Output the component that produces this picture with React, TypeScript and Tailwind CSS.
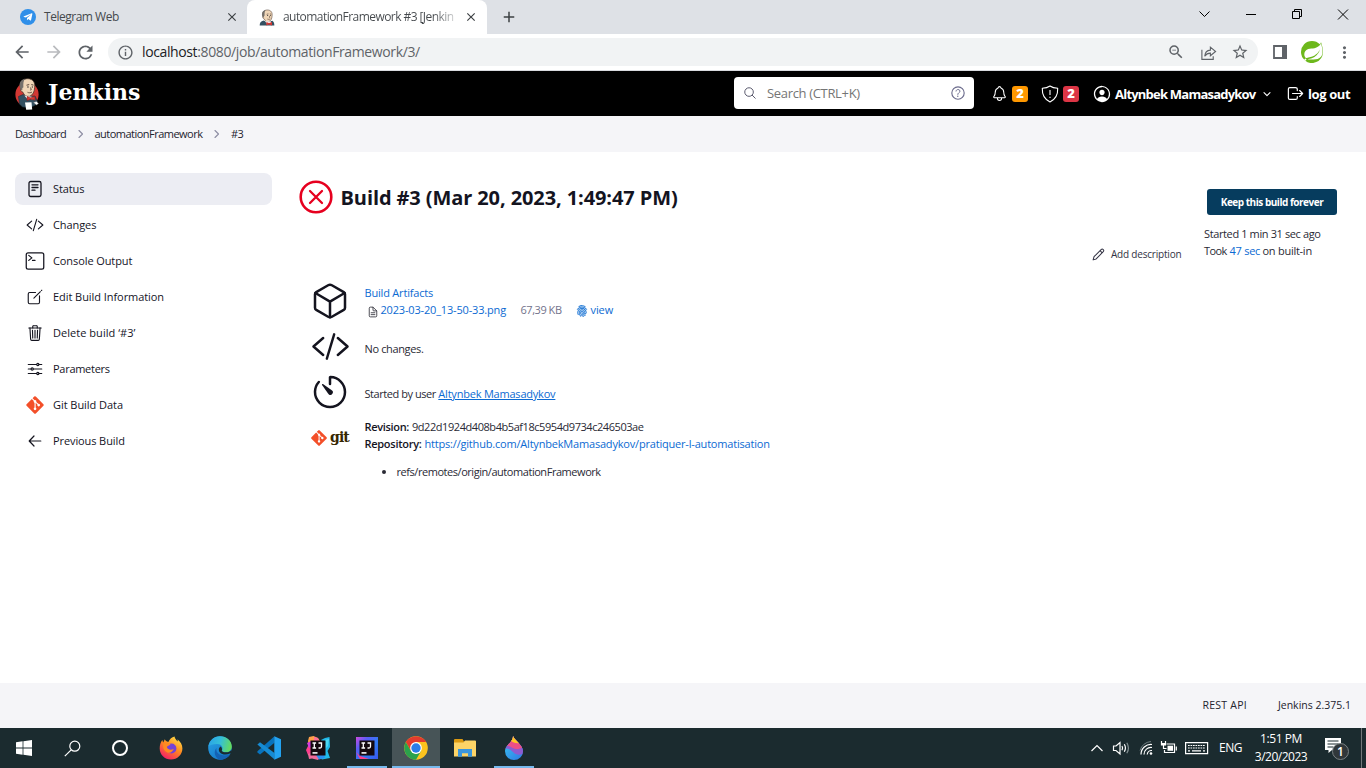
import React from "react";
import {
  IoCodeSlashOutline, IoTerminalOutline, IoCreateOutline, IoTrashOutline, IoOptionsOutline,
  IoCubeOutline, IoTimerOutline, IoNotificationsOutline, IoHelpCircleOutline, IoSearchOutline, IoPersonCircleOutline,
  IoLogOutOutline, IoDocumentTextOutline, IoFingerPrintOutline,
} from "react-icons/io5";
import { MdArrowBack, MdArrowForward, MdRefresh, MdInfoOutline, MdOutlineZoomOut, MdStarOutline, MdMoreVert, MdClose, MdAdd } from "react-icons/md";
import { FaGitAlt, FaTelegramPlane } from "react-icons/fa";
import { SiSpring } from "react-icons/si";

function ButlerFace() {
  return (
    <>
      <path d="M5.500 10C4 4 8 .5 13 .7c5 .2 7.500 4 6.600 9-.2 4-1.600 7.300-5 8.600-3.500.6-5.600-1-6.600-4-1.700-.5-2.700-2-2.500-4.300z" fill="#f0d6b7" stroke="#49372d" strokeWidth=".8" />
      <path d="M5.300 10.500C3.500 5 5.500 1.800 10 .8 8.300 3 8.200 6 8.400 9.500c-.8-.2-1.400.8-1 2.800-1.200-.2-1.700-.8-2.100-1.800z" fill="#74706b" />
      <path d="M11.500 7.200l2.700-.6M16.300 6.600l2.200.5" fill="none" stroke="#49372d" strokeWidth=".9" />
      <path d="M12.200 9h1.500M16.800 9h1.200" stroke="#222" strokeWidth="1.200" />
      <path d="M12.500 14.300c1.500.8 3.200.6 4.500-.3M15.500 9.500l.8 2.200-1.200.4" fill="none" stroke="#49372d" strokeWidth=".8" />
    </>
  );
}

function Butler({ className }: { className: string }) {
  return (
    <svg viewBox="0 0 24 32" className={className}>
      <ellipse cx="12" cy="16.500" rx="11.600" ry="12.300" fill="#d33833" />
      <path d="M3.500 18.500l4.500-2 5 2 7-.500 2.500 5.500-2 3.500-5 2.500-8-.500-3-3z" fill="#335061" stroke="#1d2f3a" strokeWidth=".6" />
      <ButlerFace />
      <path d="M9.500 17.500l3.200 4 2.300-1 2.500 1.200.5-2.700z" fill="#fff" />
      <path d="M12 18.300l3.500 1.400 4.300-1.400.4 3.900-4.400-.9-3.800 1.300z" fill="#d33833" stroke="#7d1b18" strokeWidth=".5" />
      <path d="M10 24.500l6.500-.300.7 7.300-6 .3z" fill="#fff" />
      <path d="M18.500 24.500l3-1 2 2-2 1.500z" fill="#fff" stroke="#6d6b6d" strokeWidth=".4" />
    </svg>
  );
}

function ButlerBust({ className }: { className: string }) {
  return (
    <svg viewBox="0 0 24 24" className={className}>
      <path d="M1 24c0-4 1.500-6 6-7.500L12 19l8-2c2 1.500 3 3.500 3 7z" fill="#335061" />
      <ButlerFace />
      <path d="M9 17.500l3.500 4.500 2.500-1.500 3 1.500V18z" fill="#fff" />
      <path d="M11 18.800l4 1.400 4.500-1.600V24l-4.500-1.600L11 24z" fill="#d33833" />
    </svg>
  );
}

function StatusDoc({ className }: { className: string }) {
  return (
    <svg viewBox="0 0 18 18" className={className} fill="none" stroke="currentColor" strokeWidth="1.300" strokeLinecap="round">
      <rect x="3" y="1.500" width="12" height="15" rx="1.700" />
      <path d="M6 4.800h6M6 7.500h6M6 10.200h3" />
    </svg>
  );
}

function Arrow({ className }: { className: string }) {
  return (
    <svg viewBox="0 0 18 18" className={className} fill="none" stroke="currentColor" strokeWidth="1.200" strokeLinecap="round" strokeLinejoin="round">
      <path d="M8 4L3.200 9 8 14M3.500 9h11.300" />
    </svg>
  );
}

function Pencil({ className }: { className: string }) {
  return (
    <svg viewBox="0 0 14 14" className={className} fill="none" stroke="currentColor" strokeWidth="1.100" strokeLinejoin="round">
      <path d="M1.200 12.800l1-3.400 7.600-7.700q1.200-1.100 2.300 0t0 2.300L4.500 11.800zM8.700 2.900l2.300 2.300" />
    </svg>
  );
}

function Chevron({ className, down }: { className: string; down?: boolean }) {
  return (
    <svg viewBox="0 0 10 10" className={className} fill="none" stroke="currentColor" strokeWidth="1.100" strokeLinecap="round" strokeLinejoin="round">
      <path d={down ? "M2 3.700L5 6.700l3-3" : "M3 1.500L6.500 5 3 8.500"} />
    </svg>
  );
}

function TabStrip() {
  return (
    <div className="flex h-[34px] w-full bg-[#dee1e6] text-[12px] text-[#45494d]">
      <div className="flex h-[34px] w-[247px] items-center pl-[20px]">
        <span className="flex size-4 items-center justify-center rounded-full bg-[#2f8fe9]">
          <FaTelegramPlane className="mr-px size-[10px] text-white" />
        </span>
        <span className="ml-2 w-[181px] tracking-[-0.48px]">Telegram Web</span>
        <MdClose className="size-[14px] text-[#3c4043]" />
      </div>
      <div className="flex h-[34px] w-[240px] items-center rounded-t-lg bg-white pl-[12px]">
        <ButlerBust className="h-[17px] w-4" />
        <span className="ml-2 w-[176px] bg-gradient-to-r from-[#45494d] from-85% to-[#45494d]/10 bg-clip-text whitespace-nowrap tracking-[-0.56px] text-transparent">automationFramework #3 [Jenkin</span>
        <MdClose className="ml-[5px] size-[14px] text-[#3c4043]" />
      </div>
      <div className="flex w-[44px] items-center justify-center"><MdAdd className="size-[18px] text-[#3c4043]" /></div>
      <div className="ml-auto flex h-[28px] items-center text-black">
        <svg viewBox="0 0 184 28" className="h-7 w-[184px]" fill="none" stroke="currentColor" strokeWidth="1">
          <path d="M17.500 11.500l5 5 5-5M64 14.500h10M110.500 11.500h7v7h-7zM112.500 11.500v-2h7v7h-2M156 9.500l10 10M166 9.500l-10 10" />
        </svg>
      </div>
    </div>
  );
}

function Toolbar() {
  return (
    <div className="flex h-[37px] w-full items-center border-b border-[#d9dbdf] bg-white pl-[12px] text-[#5f6368]">
      <MdArrowBack className="size-[20px]" />
      <MdArrowForward className="ml-[12px] size-[20px] text-[#b9bbbe]" />
      <MdRefresh className="ml-[11px] size-[21px]" />
      <div className="ml-[12px] flex h-7 w-[1150px] items-center rounded-full bg-[#f1f3f4] pl-[9px]">
        <MdInfoOutline className="size-[17px]" />
        <span className="ml-[8px] pb-px text-[14px] tracking-[-0.38px]"><span className="text-[#202124]">localhost</span>:8080/job/automationFramework/3/</span>
        <MdOutlineZoomOut className="ml-auto size-[18px]" />
        <svg viewBox="0 0 18 18" className="ml-[15px] size-[17px]" fill="none" stroke="currentColor" strokeWidth="1.200">
          <path d="M2 6v10.300h12V13M5 13c.3-4 2.300-6.300 6-6.500V3.300L16.500 8 11 12.500V9.700C8.500 9.700 6.500 10.700 5 13z" />
        </svg>
        <MdStarOutline className="mr-[9px] ml-[14px] size-[18px]" />
      </div>
      <svg viewBox="0 0 14 14" className="ml-[15px] size-[14px]"><path d="M1 1h12v12H1z" fill="none" stroke="currentColor" strokeWidth="1.800" /><path d="M9 0h5v14H9z" fill="currentColor" /></svg>
      <SiSpring className="ml-[14px] size-[22px] text-[#6db81c]" />
      <MdMoreVert className="ml-[12px] size-[19px]" />
    </div>
  );
}

function Header() {
  return (
    <header className="flex h-[45px] w-full items-center bg-black pl-[15px] text-white">
      <Butler className="h-8 w-6" />
      <span className="mb-[3px] ml-[9px] font-['DejaVu_Serif',serif] text-[22px] leading-[30px] font-bold">Jenkins</span>
      <div className="mr-px mb-px ml-auto flex h-8 w-[240px] items-center rounded-[4px] bg-white pl-[9px]">
        <IoSearchOutline className="size-[14px] text-[#45455a]" />
        <span className="ml-[10px] pt-[2px] text-[13px] tracking-[-0.33px] text-[#757575]">Search (CTRL+K)</span>
        <IoHelpCircleOutline className="mr-[7px] ml-auto size-[18px] text-[#6b6b8c]" />
      </div>
      <IoNotificationsOutline className="ml-[16px] size-[17px]" />
      <span className="ml-[4px] flex h-4 w-4 items-center justify-center rounded-[3px] bg-[#ff9800] text-[13px] font-extrabold">2</span>
      <svg viewBox="0 0 18 18" className="ml-[13px] size-[18px]" fill="none" stroke="currentColor" strokeWidth="1.100" strokeLinejoin="round">
        <path d="M9 1C6.500 2.700 4.300 3.100 1.300 3.300 1 9.600 2.800 14 9 17c6.200-3 8-7.400 7.700-13.700C13.700 3.100 11.500 2.700 9 1zM9 5v5M9 11.700v1.300" />
      </svg>
      <span className="ml-[4px] flex h-4 w-4 items-center justify-center rounded-[3px] bg-[#dc3545] text-[13px] font-extrabold">2</span>
      <IoPersonCircleOutline className="ml-[13px] size-[20px]" />
      <span className="ml-[3px] w-[142px] pt-[2px] text-[13px] font-bold whitespace-nowrap tracking-[-0.78px]">Altynbek Mamasadykov</span>
      <Chevron down className="ml-[5px] size-[10px]" />
      <IoLogOutOutline className="ml-[14px] size-[19px]" />
      <span className="ml-[3px] w-[58px] pt-[2px] text-[13px] font-bold tracking-[-0.4px]">log out</span>
    </header>
  );
}

const side = "size-[18px]";
const tasks = [
  { label: "Status", icon: <StatusDoc className={side} />, track: "tracking-[-0.12px]", active: true },
  { label: "Changes", icon: <IoCodeSlashOutline className={side} />, track: "tracking-[-0.08px]" },
  { label: "Console Output", icon: <IoTerminalOutline className="size-[20px]" />, track: "tracking-[-0.09px]" },
  { label: "Edit Build Information", icon: <IoCreateOutline className={side} />, track: "tracking-[-0.06px]" },
  { label: "Delete build ‘#3’", icon: <IoTrashOutline className={side} />, track: "tracking-[0.04px]" },
  { label: "Parameters", icon: <IoOptionsOutline className={side} />, track: "tracking-[-0.28px]" },
  { label: "Git Build Data", icon: <FaGitAlt className="size-[20px] text-[#f34f29]" />, track: "tracking-[-0.05px]" },
  { label: "Previous Build", icon: <Arrow className={side} />, track: "tracking-[-0.1px]" },
];

function Sidebar() {
  return (
    <nav className="flex w-[257px] shrink-0 flex-col gap-1">
      {tasks.map((t) => (
        <a key={t.label} className={`flex h-8 items-center rounded-lg pl-[10px] text-[11px] font-medium text-[#14141f] ${t.track} ${t.active ? "bg-[#ecedf3]" : ""}`}>
          <span className="flex size-5 items-center justify-center">{t.icon}</span>
          <span className="ml-2">{t.label}</span>
        </a>
      ))}
    </nav>
  );
}

function Build() {
  return (
    <section className="ml-[27px] w-[793px] shrink-0 pt-[7px] text-[11px] text-[#2a2a35]">
      <div className="flex h-[34px] items-center text-[#14141f]">
        <svg viewBox="0 0 34 34" className="size-[34px]" fill="none" stroke="#e6001f" strokeLinecap="round">
          <circle cx="17" cy="17" r="15.300" strokeWidth="2.600" /><path d="M11 11l12 12M23 11L11 23" strokeWidth="2.300" />
        </svg>
        <h1 className="ml-[7.500px] pt-px text-[20px] leading-[28px] font-bold tracking-[-0.1px]">Build #3 (Mar 20, 2023, 1:49:47 PM)</h1>
      </div>
      <div className="mt-[67px] flex h-[40px]">
        <span className="flex w-[65.500px] justify-center pr-[3px] text-[#14141f]"><IoCubeOutline className="size-10" /></span>
        <div className="leading-[17px] font-medium text-[#0b6ad2]">
          <div className="pt-[3px] tracking-[-0.19px]">Build Artifacts</div>
          <div className="flex h-[17px] items-center">
            <IoDocumentTextOutline className="mt-[5px] ml-[2px] size-[12px] text-[#14141f]" />
            <span className="ml-[2px] w-[140px] tracking-[-0.17px]">2023-03-20_13-50-33.png</span>
            <span className="w-[55px] font-normal tracking-[-0.46px] text-[#73738c]">67,39 KB</span>
            <IoFingerPrintOutline className="mt-[3px] size-[12px]" stroke="currentColor" strokeWidth="12" />
            <span className="ml-[3px] tracking-[-0.1px]">view</span>
          </div>
        </div>
      </div>
      <div className="mt-[6px] flex h-[40px] items-center">
        <span className="flex w-[65.500px] justify-center pr-[3px] pb-px text-[#14141f]"><IoCodeSlashOutline className="size-[39px]" /></span>
        <span className="pt-[4px] tracking-[-0.36px]">No changes.</span>
      </div>
      <div className="mt-[5px] flex h-[40px] items-center">
        <span className="flex w-[65.500px] justify-center pr-[3px] text-[#14141f]"><IoTimerOutline className="size-10" /></span>
        <span className="pt-[4px] tracking-[-0.44px]">Started by user <a className="font-medium tracking-[-0.21px] text-[#0b6ad2] underline">Altynbek Mamasadykov</a></span>
      </div>
      <div className="mt-[6px] flex">
        <span className="mt-px flex h-[38px] w-[65.500px] items-center pl-[11px]">
          <FaGitAlt className="size-[18px] text-[#f34f29]" />
          <span className="-mt-[3px] ml-[2px] font-['DejaVu_Serif',serif] text-[14px] leading-[18px] font-bold tracking-[-0.9px] text-[#362701]">git</span>
        </span>
        <div className="leading-[17px]">
          <div><b className="font-semibold tracking-[-0.33px] text-[#14141f]">Revision:</b><span className="ml-[3px] tracking-[-0.44px]">9d22d1924d408b4b5af18c5954d9734c246503ae</span></div>
          <div><b className="font-semibold tracking-[-0.28px] text-[#14141f]">Repository:</b><a className="ml-[3px] font-medium tracking-[-0.19px] text-[#0b6ad2]">https://github.com/AltynbekMamasadykov/pratiquer-l-automatisation</a></div>
          <ul className="mt-[11px] ml-[32px] list-disc tracking-[-0.45px]"><li>refs/remotes/origin/automationFramework</li></ul>
        </div>
      </div>
    </section>
  );
}

function Actions() {
  return (
    <>
      <div className="mt-[71px] flex h-[20px] w-[112px] shrink-0 items-center text-[10px] font-medium text-[#333344]">
        <Pencil className="size-[13px]" />
        <span className="ml-[6px] pt-px tracking-[-0.2px]">Add description</span>
      </div>
      <div className="mt-[16px] w-[162px] shrink-0 text-[11px] leading-[17px] text-[#2a2a35]">
        <button className="ml-[3px] flex h-[26px] w-[130px] items-center justify-center rounded-[3px] bg-[#063c5e] text-[10px] font-bold tracking-[-0.48px] text-white">Keep this build forever</button>
        <div className="mt-[10px] tracking-[-0.38px]">Started 1 min 31 sec ago</div>
        <div className="flex tracking-[-0.26px]"><span className="w-[25.500px] tracking-[-0.6px]">Took</span><span className="w-[33px] font-medium text-[#0b6ad2]">47 sec</span><span>on built-in</span></div>
      </div>
    </>
  );
}

function Firefox() {
  return (
    <svg viewBox="0 0 24 24" className="size-6">
      <defs><linearGradient id="ff" x1=".8" y1="0" x2=".2" y2="1"><stop offset="0" stopColor="#ffe14a" /><stop offset=".45" stopColor="#ff8a1f" /><stop offset="1" stopColor="#f5156c" /></linearGradient></defs>
      <path d="M15.500.5c.3 2.500 2 3.400 3.200 5 .1-.8 0-1.500-.3-2.200 3 2.300 5 5.600 5 9.200C23.400 18.600 18.300 23.500 12 23.500S.7 18.700.7 12.500c0-3.400 1-6.200 2.600-8.500l.8 2.500C5 5.600 5 4.500 5.800 3.300c.6 1.500 1.800 2.500 3.500 2.600 1.500-2.900 3.500-4.700 6.200-5.400z" fill="url(#ff)" />
      <circle cx="12.500" cy="12.500" r="4.900" fill="#7542d6" />
      <path d="M4.500 7.500c3-1.500 5.500-.8 7 .8-1.500 1.700-3 1.400-3.700 2.700 1 2.500 4 3.800 7 1.800-1 3-3.500 4.700-6.500 3.600-3.300-1.200-5-4.900-3.800-8.900z" fill="#ff8a20" />
    </svg>
  );
}
function Edge() {
  return (
    <svg viewBox="0 0 24 24" className="size-6">
      <defs>
        <linearGradient id="ea" x1="0" y1=".3" x2="1" y2=".5"><stop offset="0" stopColor="#2aa4e8" /><stop offset=".5" stopColor="#35bfd8" /><stop offset="1" stopColor="#65dc5b" /></linearGradient>
        <linearGradient id="eb" x1="0" y1="0" x2=".8" y2="1"><stop offset="0" stopColor="#2aa4e8" /><stop offset="1" stopColor="#1273c4" /></linearGradient>
      </defs>
      <circle cx="12" cy="12" r="11.800" fill="url(#eb)" />
      <path d="M.4 10.500C1.500 4 6.300.2 12 .2c6.700 0 11.800 4.700 11.800 10.300 0 3.500-2.700 5.800-6 5.800-2.600 0-4.300-1-3.700-2.300 1.500-2.600-.7-6-5-6C5 8 1.500 9 .4 10.500z" fill="url(#ea)" />
      <path d="M8.500 12c-1 5.500 4.500 9.300 13.500 6.500-1.500 2.500-5 5.300-9.500 5.300-5.500-1-7.500-8.300-4-11.800z" fill="#1462b4" />
      <path d="M12.500 10.500c-2 1.500-2.300 4-.5 6 2.500 2.600 6.500 2.500 9.800 1 1-.3 1.600.2 2.400-.5L23.500 14c-1.500 2-3.700 2.500-5.900 2.300-2.600 0-4.300-1-3.700-2.300.5-1.200-.2-2.700-1.400-3.500z" fill="#1b2b2f" />
    </svg>
  );
}
function Code() {
  return (
    <svg viewBox="0 0 24 24" className="size-6">
      <path d="M17.500.3v6.500L3 18.500l-2.600-2v-1.200z" fill="#0873bd" />
      <path d="M.4 8.500L3 6.200 17.500 17v6.500z" fill="#168bd3" />
      <path d="M17.300.2L24 3.200v17.600l-6.700 3z" fill="#23a3f1" />
    </svg>
  );
}
function Idea({ splash }: { splash?: boolean }) {
  return (
    <svg viewBox="0 0 24 24" className="size-6">
      <defs>
        <linearGradient id="ip" x1="0" y1="0" x2="1" y2=".9"><stop offset="0" stopColor="#d04be0" /><stop offset=".3" stopColor="#5a5cf5" /><stop offset=".65" stopColor="#2f7cf5" /><stop offset="1" stopColor="#3a5af0" /></linearGradient>
      </defs>
      {splash ? (
        <>
          <path d="M3 1l4.500-1L12 2l2 3-7 3-4 3-1-6z" fill="#ffa04a" />
          <path d="M8 1l4 1 1 3-5 1z" fill="#fc6f9a" />
          <path d="M0 14l4-8 3 6-2 8-3-1z" fill="#fc3f8c" />
          <path d="M1 7l4-2 1 6-3 1z" fill="#d53be0" />
          <path d="M15 4l4-2 4.500-1 .5 10-2.500 4L24 22l-8 1.500L12 20l7-10z" fill="#20b8e8" />
          <path d="M19 4l4-1-1 7-3 3z" fill="#4ad6f2" />
          <path d="M2 18l5-2 9 3-4 5-6-1.500L3 23z" fill="#f06a9a" />
          <path d="M10 19l8 0 1 3-6 1.500z" fill="#2a90f0" />
        </>
      ) : (
        <>
          <path d="M1 1h22v22H1z" fill="url(#ip)" />
          <path d="M1 16l4 7h9l-9-3z" fill="#fc3a8c" />
        </>
      )}
      <path d="M4.500 4.500h15v15h-15z" fill="#14090f" />
      <path d="M6.500 7h3.600M8.300 7v5M6.500 12h3.600M12.500 7h3.700M15.500 7v3.500q0 1.500-1.500 1.500h-1.500" stroke="#fff" strokeWidth="1.300" fill="none" />
      <path d="M6.500 16h5v1.800h-5z" fill="#ddd" />
    </svg>
  );
}
function Chrome() {
  return (
    <svg viewBox="0 0 24 24" className="size-6">
      <circle cx="12" cy="12" r="11.800" fill="#fcc31e" />
      <path d="M1.800 6.100A11.800 11.800 0 0 1 22.200 6.100H12L6.900 15z" fill="#e33b2e" />
      <path d="M1.800 6.100l5.100 8.900 5.100 2.900 5.100-2.900-5.100 8.800A11.800 11.800 0 0 1 1.800 6.100z" fill="#2ba24c" />
      <circle cx="12" cy="12" r="5.900" fill="#fff" /><circle cx="12" cy="12" r="4.700" fill="#2a7de9" />
    </svg>
  );
}
function Folder() {
  return (
    <svg viewBox="0 0 24 24" className="size-6">
      <path d="M1 4q0-1 1-1h7.500l1.500 2.500H23v4H1z" fill="#dc9a12" />
      <path d="M1 6.500h9.500L12 4.500h10q1 0 1 1v15H1z" fill="#fdd467" />
      <path d="M5 20.800V13h14v7.800h-4v-3.500H9v3.500z" fill="#3b96dd" />
    </svg>
  );
}
function Drop() {
  return (
    <svg viewBox="0 0 24 24" className="size-6">
      <defs>
        <clipPath id="dc"><path d="M11 0c2.500 5.500 10 9 10 15.300A9 8.600 0 0 1 3 15.300C3 9 11 6.500 11 0z" /></clipPath>
        <linearGradient id="dd" x1="0" y1="0" x2="1" y2="1"><stop offset="0" stopColor="#39d2f2" /><stop offset="1" stopColor="#2f72e6" /></linearGradient>
      </defs>
      <g clipPath="url(#dc)">
        <path d="M0 0h24v24H0z" fill="url(#dd)" />
        <path d="M0 14c5-3 8-1 11 2s6 4 13 1V0H0z" fill="#8e5bd0" />
        <path d="M0 11c6-3 8 0 12 1.500s7 0 12-3V0H0z" fill="#ec4f86" />
        <path d="M8 0h10v7c-3 .5-6 0-9-2z" fill="#ffc823" />
      </g>
    </svg>
  );
}

function TaskButton({ children, state }: { children: React.ReactNode; state?: "open" | "active" }) {
  return (
    <div className="flex h-10 w-[49px] justify-center">
      <div className={`flex h-10 items-center justify-center ${state ? "border-b-2 border-[#76b9ed] pt-[2px]" : ""} ${state === "active" ? "w-12 bg-[#475457]" : "w-10"}`}>{children}</div>
    </div>
  );
}

function Taskbar() {
  return (
    <div className="flex h-10 w-full items-center bg-[#1b2b2f] text-white">
      <div className="flex w-12 justify-center"><svg viewBox="0 0 16 16" className="size-4" fill="#fff"><path d="M0 2.200l6.600-.9v6.300H0zM7.400 1.200L16 0v7.600H7.400zM0 8.400h6.600v6.300L0 13.800zM7.400 8.400H16V16l-8.600-1.200z" /></svg></div>
      <div className="flex w-12 justify-center"><svg viewBox="0 0 17 17" className="size-[17px]" fill="none" stroke="#fff" strokeWidth="1.200"><circle cx="10.800" cy="6.200" r="5" /><path d="M7.200 9.800L.8 16.200" /></svg></div>
      <div className="flex w-12 justify-center"><span className="size-4 rounded-full border-2 border-white" /></div>
      <div className="flex pl-[2px]">
        <TaskButton><Firefox /></TaskButton>
        <TaskButton><Edge /></TaskButton>
        <TaskButton><Code /></TaskButton>
        <TaskButton><Idea splash /></TaskButton>
        <TaskButton state="open"><Idea /></TaskButton>
        <TaskButton state="active"><Chrome /></TaskButton>
        <TaskButton><Folder /></TaskButton>
        <TaskButton state="open"><Drop /></TaskButton>
      </div>
      <svg viewBox="0 0 120 20" className="ml-auto h-5 w-[120px]" fill="none" stroke="#fff" strokeWidth="1.200">
        <path d="M1.500 13l5.500-5.500L12.500 13" />
        <path d="M23.500 8h2.500l4-3.500v11.500L26 12.500h-2.500zM32 8q1.200 2 0 4.300M34.300 6.300q2.300 3.700 0 7.400" /><path d="M36.800 4.700q3.300 5.300 0 10.600" stroke="#839093" />
        <path d="M54 16.500a7 7 0 0 1 8-7M57.200 16.500a4.500 4.500 0 0 1 4.800-4" /><path d="M51 16.500a10 10 0 0 1 11-10" /><path d="M50 12.500a13 13 0 0 1 11-9" stroke="#839093" strokeWidth=".8" /><circle cx="61" cy="15.500" r="1.300" fill="#fff" stroke="none" />
        <path d="M76.500 6h8v8.500H74.500V12M86.300 8.500v4" /><path d="M77.500 7.700h5.500v5.100h-5.500z" fill="#fff" stroke="none" /><path d="M71.500 3v3.500h4V3M71.500 5.500h4v1.500h-4zM73.500 7v3.500h3" />
        <path d="M95.600 4.600h22v11h-22z" /><path d="M98 7.500h17M98 10h17" strokeDasharray="1.700 .8" /><path d="M98 12.800h2M102 12.800h9M113 12.800h2" />
      </svg>
      <span className="ml-[9px] w-[36px] text-[12px] tracking-[-0.5px]">ENG</span>
      <div className="mb-px flex w-[52px] flex-col items-center text-[12px] leading-[18px] whitespace-nowrap"><span className="tracking-[-0.41px]">1:51 PM</span><span className="tracking-[-0.5px]">3/20/2023</span></div>
      <div className="relative ml-[17px] h-6 w-[37px]">
        <svg viewBox="0 0 18 18" className="size-[18px]" fill="#fff"><path d="M1 2h16v12h-9l-3.500 3v-3H1z" /><path d="M3.500 5h11M3.500 8h11M3.500 11h6" stroke="#1b2b2f" strokeWidth="1" /></svg>
        <span className="absolute top-[7px] left-[8px] flex size-[17px] items-center justify-center rounded-full border border-[#7a8284] bg-[#30373a] text-[12px] leading-none font-semibold">1</span>
      </div>
      <div className="h-10 w-[5px] border-l border-[#71797b]" />
    </div>
  );
}

export default function App() {
  return (
    <div className="flex h-[768px] w-[1366px] flex-col overflow-hidden bg-white font-['Open_Sans',sans-serif]">
      <TabStrip />
      <Toolbar />
      <Header />
      <div className="flex h-[36px] items-center bg-[#f5f5f8] pl-[15px] text-[11px] text-[#23232e]">
        <span className="w-[61px] tracking-[-0.64px]">Dashboard</span>
        <Chevron className="size-[10px] text-[#8d8da3]" />
        <span className="ml-[8.500px] w-[117px] tracking-[-0.52px]">automationFramework</span>
        <Chevron className="size-[10px] text-[#8d8da3]" />
        <span className="ml-[9.500px] tracking-[-0.5px]">#3</span>
      </div>
      <main className="flex h-[531px] pt-[21px] pl-[15px]">
        <Sidebar />
        <Build />
        <Actions />
      </main>
      <footer className="flex h-[45px] items-center justify-end gap-[31px] bg-[#f5f5f8] pr-[15px] text-[10.500px] text-[#23232e]">
        <span className="tracking-[0.25px]">REST API</span>
        <span>Jenkins 2.375.1</span>
      </footer>
      <Taskbar />
    </div>
  );
}
